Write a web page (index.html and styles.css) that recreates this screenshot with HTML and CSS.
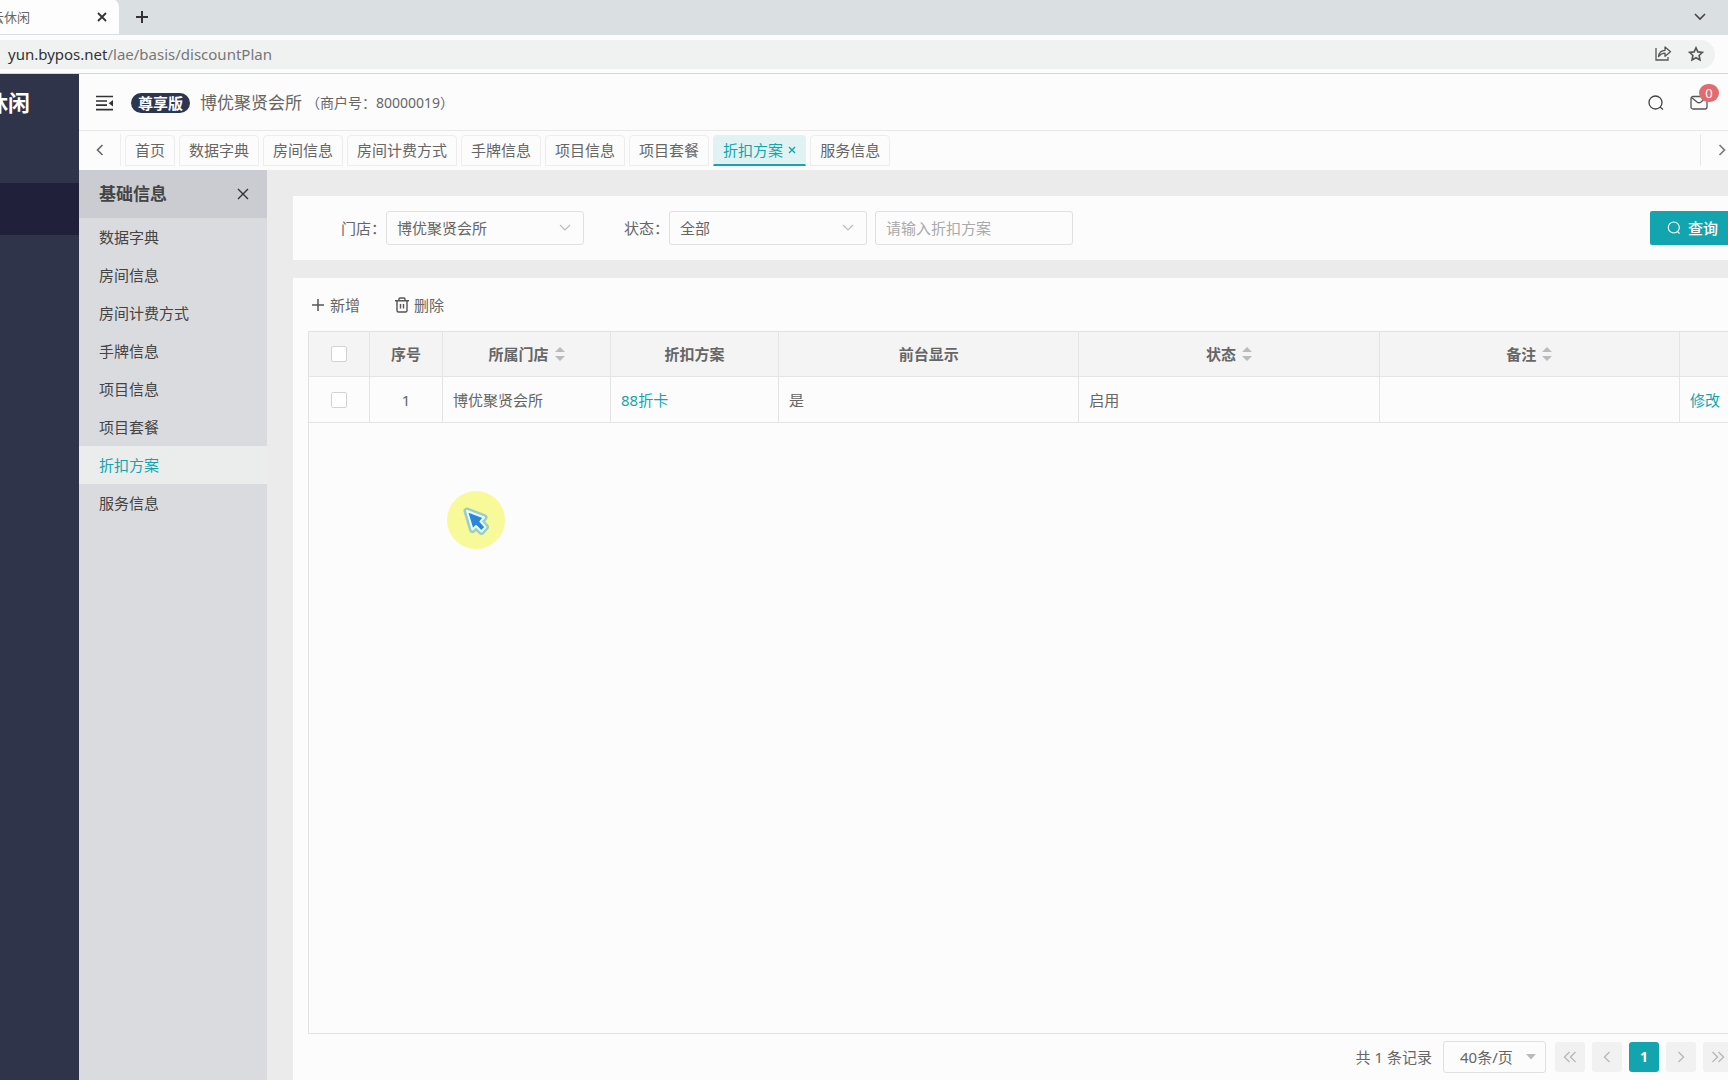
FILE: index.html
```html
<!DOCTYPE html>
<html lang="zh-CN">
<head>
<meta charset="utf-8">
<title>云休闲</title>
<link rel="stylesheet" href="styles.css">
</head>
<body>
<header class="browser">
  <div class="strip">
    <div class="page-tab">
      <span class="page-title">云休闲</span>
      <button class="bare" aria-label="关闭标签页"><svg width="10" height="10" viewBox="0 0 10 10"><path d="M1 1l8 8M9 1l-8 8" stroke="#333" stroke-width="1.8"/></svg></button>
    </div>
    <button class="bare new-tab" aria-label="新标签页"><svg width="14" height="14" viewBox="0 0 14 14"><path d="M7 1v12M1 7h12" stroke="#333" stroke-width="2"/></svg></button>
    <button class="bare strip-more" aria-label="更多标签页"><svg width="12" height="8" viewBox="0 0 12 8" fill="none"><path d="M1 1l5 5 5-5" stroke="#444" stroke-width="1.6"/></svg></button>
  </div>
  <div class="address-row">
    <div class="address">
      <span class="url"><b>yun.bypos.net</b>/lae/basis/discountPlan</span>
      <button class="bare" aria-label="分享"><svg width="18" height="17" viewBox="0 0 18 17" fill="none" stroke="#555" stroke-width="1.3"><path d="M2 3v12h12v-3"/><path d="M4.500 11.500C5 7.500 7.500 5.500 11 5.300V2l5.500 4.700-5.500 4.600V8.200C8.500 8.200 6.500 9 4.500 11.500z" stroke-linejoin="round"/></svg></button>
      <button class="bare" aria-label="收藏"><svg width="16" height="16" viewBox="0 0 16 16" fill="none" stroke="#555" stroke-width="1.6"><path d="M8 1.800l1.900 4.100 4.500.5-3.300 3.100.9 4.500-4-2.300L4 14l.9-4.500L1.600 6.400l4.500-.5z"/></svg></button>
    </div>
  </div>
</header>

<div class="app">
  <aside class="rail">
    <div class="logo">云休闲</div>
    <div class="rail-active"></div>
  </aside>

  <div class="workspace">
    <div class="topbar">
      <button class="bare" aria-label="收起菜单"><svg width="18" height="16" viewBox="0 0 18 16"><path d="M0 1.500h17M0 6h11M0 10.200h11M0 14.700h17" stroke="#333" stroke-width="1.700"/><path d="M17 5v6.400l-4.300-3.200z" fill="#333"/></svg></button>
      <span class="edition">尊享版</span>
      <span class="merchant">博优聚贤会所</span>
      <span class="merchant-no">（商户号：80000019）</span>
      <button class="bare search" aria-label="搜索"><svg width="16" height="16" viewBox="0 0 16 16" fill="none" stroke="#444" stroke-width="1.300"><circle cx="7.500" cy="7.500" r="6.500"/><path d="M12 12l3 2.500"/></svg></button>
      <button class="bare mail" aria-label="消息"><svg width="18" height="15" viewBox="0 0 18 15" fill="none" stroke="#555" stroke-width="1.300"><rect x="1" y="1.500" width="16" height="12.500" rx="2"/><path d="M1.500 2.500l5.500 4.500q2 1.500 4 0l5.500-4.500"/></svg><span class="badge">0</span></button>
    </div>

    <nav class="tabs">
      <button class="bare tab-prev" aria-label="向左"><svg width="8" height="12" viewBox="0 0 8 12" fill="none"><path d="M6.500 1L1.500 6l5 5" stroke="#666" stroke-width="1.600"/></svg></button>
      <a class="tab" href="#">首页</a>
      <a class="tab" href="#">数据字典</a>
      <a class="tab" href="#">房间信息</a>
      <a class="tab" href="#">房间计费方式</a>
      <a class="tab" href="#">手牌信息</a>
      <a class="tab" href="#">项目信息</a>
      <a class="tab" href="#">项目套餐</a>
      <a class="tab current" href="#">折扣方案<svg width="8" height="8" viewBox="0 0 8 8"><path d="M1 1l6 6M7 1L1 7" stroke="#13a5af" stroke-width="1.400"/></svg></a>
      <a class="tab" href="#">服务信息</a>
      <button class="bare tab-next" aria-label="向右"><svg width="8" height="12" viewBox="0 0 8 12" fill="none"><path d="M1.500 1l5 5-5 5" stroke="#777" stroke-width="1.600"/></svg></button>
    </nav>

    <div class="body">
      <nav class="submenu">
        <div class="submenu-head"><h2>基础信息</h2><button class="bare" aria-label="关闭"><svg width="12" height="12" viewBox="0 0 12 12"><path d="M1 1l10 10M11 1L1 11" stroke="#333" stroke-width="1.400"/></svg></button></div>
        <a href="#">数据字典</a>
        <a href="#">房间信息</a>
        <a href="#">房间计费方式</a>
        <a href="#">手牌信息</a>
        <a href="#">项目信息</a>
        <a href="#">项目套餐</a>
        <a class="current" href="#">折扣方案</a>
        <a href="#">服务信息</a>
      </nav>

      <main class="content">
        <form class="card filters">
          <label for="store">门店：</label>
          <span class="select"><select id="store"><option>博优聚贤会所</option></select><svg width="12" height="8" viewBox="0 0 12 8" fill="none"><path d="M1 1l5 5 5-5" stroke="#bbb" stroke-width="1.200"/></svg></span>
          <label class="second" for="state">状态：</label>
          <span class="select"><select id="state"><option>全部</option></select><svg width="12" height="8" viewBox="0 0 12 8" fill="none"><path d="M1 1l5 5 5-5" stroke="#bbb" stroke-width="1.200"/></svg></span>
          <input class="keyword" type="text" aria-label="折扣方案" placeholder="请输入折扣方案">
          <button class="query" type="button"><svg width="14" height="14" viewBox="0 0 14 14" fill="none" stroke="#fff" stroke-width="1.100"><circle cx="6.800" cy="6.500" r="5.500"/><path d="M10.500 10.500l2 2"/></svg>查询</button>
        </form>

        <section class="card listing">
          <div class="tools">
            <button class="bare"><svg width="14" height="14" viewBox="0 0 14 14"><path d="M7 1v12M1 7h12" stroke="#555" stroke-width="1.500"/></svg>新增</button>
            <button class="bare"><svg width="14" height="16" viewBox="0 0 14 16" fill="none" stroke="#555" stroke-width="1.400"><path d="M0 3.700h14M4 3.500V2q0-1 1-1h4q1 0 1 1v1.500M2 4v9.500q0 1.500 1.500 1.500h7q1.500 0 1.500-1.500V4M5.500 7v4.500M8.500 7v4.500"/></svg>删除</button>
          </div>
          <div class="grid">
            <table>
              <colgroup><col class="c-check"><col class="c-no"><col class="c-name"><col class="c-name"><col><col><col><col class="c-op"></colgroup>
              <thead>
                <tr>
                  <th><input type="checkbox" aria-label="全选"></th>
                  <th>序号</th>
                  <th>所属门店<svg class="sort" width="10" height="16" viewBox="0 0 10 16" fill="#bbb"><path d="M5 1l5 5H0zM5 15l5-5H0z"/></svg></th>
                  <th>折扣方案</th>
                  <th>前台显示</th>
                  <th>状态<svg class="sort" width="10" height="16" viewBox="0 0 10 16" fill="#bbb"><path d="M5 1l5 5H0zM5 15l5-5H0z"/></svg></th>
                  <th>备注<svg class="sort" width="10" height="16" viewBox="0 0 10 16" fill="#bbb"><path d="M5 1l5 5H0zM5 15l5-5H0z"/></svg></th>
                  <th></th>
                </tr>
              </thead>
              <tbody>
                <tr>
                  <td class="mid"><input type="checkbox" aria-label="选择第1行"></td>
                  <td class="mid">1</td>
                  <td>博优聚贤会所</td>
                  <td><a href="#">88折卡</a></td>
                  <td>是</td>
                  <td>启用</td>
                  <td></td>
                  <td><a href="#">修改</a></td>
                </tr>
              </tbody>
            </table>
          </div>
          <div class="pager">
            <span class="total">共 1 条记录</span>
            <span class="select size"><select aria-label="每页条数"><option>40条/页</option></select><svg width="10" height="6" viewBox="0 0 10 6"><path d="M0 0h10L5 5.500z" fill="#bbb"/></svg></span>
            <button aria-label="首页"><svg width="14" height="12" viewBox="0 0 14 12" fill="none" stroke="#bbb" stroke-width="1.500"><path d="M6.500 1l-5 5 5 5M12.500 1l-5 5 5 5"/></svg></button>
            <button aria-label="上一页"><svg width="8" height="12" viewBox="0 0 8 12" fill="none" stroke="#bbb" stroke-width="1.500"><path d="M6.500 1l-5 5 5 5"/></svg></button>
            <button class="current">1</button>
            <button aria-label="下一页"><svg width="8" height="12" viewBox="0 0 8 12" fill="none" stroke="#bbb" stroke-width="1.500"><path d="M1.500 1l5 5-5 5"/></svg></button>
            <button aria-label="末页"><svg width="14" height="12" viewBox="0 0 14 12" fill="none" stroke="#bbb" stroke-width="1.500"><path d="M1.500 1l5 5-5 5M7.500 1l5 5-5 5"/></svg></button>
          </div>
        </section>
      </main>
    </div>
  </div>
</div>

<svg class="pointer" width="58" height="58" viewBox="0 0 58 58">
  <circle cx="29" cy="29" r="29" fill="#f8f999"/>
  <path d="M20 20l17 6.500-3.500 4 5 5.500-4 4.500-5.500-5.500-3.500 3.500z" fill="none" stroke="#75bcd4" stroke-width="7" stroke-linejoin="round" opacity=".7"/>
  <path d="M20 20l17 6.500-3.500 4 5 5.500-4 4.500-5.500-5.500-3.500 3.500z" fill="#2b86d9" stroke="#e3ffff" stroke-width="2" stroke-linejoin="round"/>
</svg>
</body>
</html>
```
FILE: styles.css
```css
* { box-sizing: border-box; }

body {
  margin: 0;
  min-height: 100vh;
  display: flex;
  flex-direction: column;
  overflow-x: hidden;
  background: #fcfcfc;
  color: #666;
  font: 14px/20px "Noto Sans", "Noto Sans CJK SC", sans-serif;
}

button, input, select { font: inherit; color: inherit; }
button { cursor: pointer; }
svg { display: block; flex: none; }
a { color: inherit; text-decoration: none; }

.bare {
  display: flex;
  align-items: center;
  padding: 0;
  border: 0;
  background: none;
}

/* Browser frame */
.strip {
  display: flex;
  align-items: center;
  height: 35px;
  padding: 0 22px 2px 0;
  background: #dadfe1;
}
.page-tab {
  display: flex;
  align-items: center;
  justify-content: space-between;
  height: 35px;
  width: 119px;
  padding-right: 12px;
  border-radius: 0 8px 0 0;
  background: #fdfdfd;
}
.page-title {
  display: flex;
  justify-content: flex-end;
  width: 30px;
  overflow: hidden;
  white-space: nowrap;
  font-size: 13px;
}
.new-tab { margin-left: 16px; }
.strip-more { margin-left: auto; }
.address-row {
  height: 39px;
  padding: 5px 13px 4px 0;
  border-bottom: 1px solid #d5d6d7;
}
.address {
  display: flex;
  align-items: center;
  gap: 16px;
  height: 29px;
  padding: 0 11px 2px 8px;
  border-radius: 0 15px 15px 0;
  background: #eff2f0;
}
.url { margin-right: auto; font-size: 15px; color: #777; }
.url b { font-weight: 400; color: #333; }

/* Application frame */
.app { flex: 1; display: flex; }
.rail { flex: none; width: 79px; background: #30344b; }
.logo {
  display: flex;
  justify-content: flex-end;
  width: 30px;
  margin: 12px 0 65px;
  overflow: hidden;
  white-space: nowrap;
  font-size: 22px;
  line-height: 32px;
  font-weight: 700;
  color: #fff;
}
.rail-active { height: 52px; background: #20203a; }
.workspace { flex: 1; min-width: 0; display: flex; flex-direction: column; }

.topbar {
  display: flex;
  align-items: center;
  height: 57px;
  padding: 1px 20px 0 17px;
  border-bottom: 1px solid #e8e8e8;
}
.edition {
  margin: 0 10px 0 17px;
  padding: 0 7px;
  border-radius: 10px;
  background: #2c3651;
  color: #fff;
  font-size: 15px;
  line-height: 20px;
  font-weight: 700;
}
.merchant { font-size: 17px; }
.merchant-no { margin-left: 4px; }
.search { margin-left: auto; }
.mail { position: relative; margin-left: 26px; }
.badge {
  position: absolute;
  left: 9px;
  top: -11px;
  width: 20px;
  height: 18px;
  border-radius: 9px;
  background: #e06c70;
  color: #fff;
  font-size: 13px;
  line-height: 18px;
  text-align: center;
}

.tabs {
  display: flex;
  align-items: center;
  gap: 4px;
  height: 39px;
  padding-bottom: 1px;
}
.tab-prev, .tab-next { height: 32px; justify-content: center; }
.tab-prev { width: 42px; border-right: 1px solid #eee; }
.tab-next { width: 28px; margin-left: auto; padding-left: 14px; border-left: 1px solid #e8e8e8; }
.tab {
  display: flex;
  align-items: center;
  gap: 5px;
  height: 31px;
  padding: 0 9px;
  border: 1px solid #ededed;
  border-radius: 4px 4px 0 0;
  font-size: 15px;
  white-space: nowrap;
}
.tab.current {
  border-color: #e0f2f2;
  border-bottom: 2px solid #13a5af;
  background: #e0f2f2;
  color: #13a5af;
}

.body { flex: 1; display: flex; background: #ebebeb; }
.submenu { flex: none; width: 188px; background: #dadbdf; color: #444; }
.submenu-head {
  display: flex;
  align-items: center;
  justify-content: space-between;
  height: 48px;
  padding: 0 18px 0 20px;
  background: #cbccd2;
}
.submenu-head h2 { margin: 0; font-size: 17px; font-weight: 700; color: #444; }
.submenu a { display: block; padding-left: 20px; font-size: 15px; line-height: 38px; }
.submenu a.current { background: #ebecec; color: #13a5af; }

.content {
  flex: 1;
  min-width: 0;
  display: flex;
  flex-direction: column;
  gap: 18px;
  padding: 26px 0 0 26px;
}
.card { background: #fcfcfc; }

/* Filters */
.filters {
  display: flex;
  align-items: center;
  height: 64px;
  padding-left: 48px;
  font-size: 15px;
}
.second { margin-left: 40px; }
.select { display: grid; align-items: center; width: 198px; height: 34px; }
.select select, .select svg { grid-area: 1 / 1; }
.select svg { justify-self: end; margin-right: 13px; pointer-events: none; }
.select select, .keyword {
  width: 100%;
  height: 100%;
  padding: 0 10px;
  border: 1px solid #e0e0e0;
  border-radius: 3px;
  background: #fcfcfc;
  appearance: none;
}
.keyword { width: 198px; height: 34px; margin-left: 8px; }
.keyword::placeholder { color: #aaa; }
.query {
  display: flex;
  align-items: center;
  gap: 7px;
  width: 78px;
  height: 34px;
  margin-left: auto;
  padding: 0 0 0 17px;
  border: 0;
  border-radius: 2px 0 0 2px;
  background: #13a5af;
  color: #fff;
  font-weight: 500;
}

/* Listing */
.listing {
  flex: 1;
  display: flex;
  flex-direction: column;
  padding: 16px 0 7px 15px;
  overflow: hidden;
}
.tools { display: flex; gap: 35px; margin-bottom: 16px; padding-left: 3px; font-size: 15px; }
.tools .bare { gap: 5px; height: 21px; }
.grid {
  flex: 1;
  border: 1px solid #e2e2e2;
  border-right: 0;
}
table { width: 100%; border-collapse: separate; border-spacing: 0; table-layout: fixed; font-size: 15px; }
.c-check { width: 61px; }
.c-no { width: 73px; }
.c-name { width: 168px; }
.c-op { width: 48px; }
th, td {
  height: 46px;
  padding: 0 0 0 10px;
  border-right: 1px solid #e4e4e4;
  border-bottom: 1px solid #e4e4e4;
  text-align: left;
  white-space: nowrap;
}
th:last-child, td:last-child { border-right: 0; }
th, td.mid { padding: 0; text-align: center; }
th { height: 45px; background: #f4f4f4; color: #666; font-weight: 700; }
td a { color: #13a5af; }
.sort { display: inline-block; margin-left: 6px; vertical-align: -2px; }
input[type="checkbox"] {
  display: block;
  width: 16px;
  height: 16px;
  margin: 0 auto;
  border: 1px solid #d2d2d2;
  border-radius: 2px;
  background: #fff;
  appearance: none;
}

.pager {
  display: flex;
  align-items: center;
  justify-content: flex-end;
  gap: 7px;
  margin: 7px -5px 0 0;
}
.total { margin-right: 4px; font-size: 15px; }
.select.size { width: 103px; height: 32px; margin-right: 2px; font-size: 15px; }
.size select { padding-left: 16px; }
.size svg { margin-right: 10px; }
.pager button {
  display: flex;
  align-items: center;
  justify-content: center;
  width: 30px;
  height: 30px;
  padding: 0;
  border: 0;
  border-radius: 3px;
  background: #f1f1f1;
}
.pager .current { background: #13a5af; color: #fff; font-weight: 700; }

/* Mouse pointer highlight over the page */
.pointer { position: absolute; left: 447px; top: 491px; pointer-events: none; }
```
